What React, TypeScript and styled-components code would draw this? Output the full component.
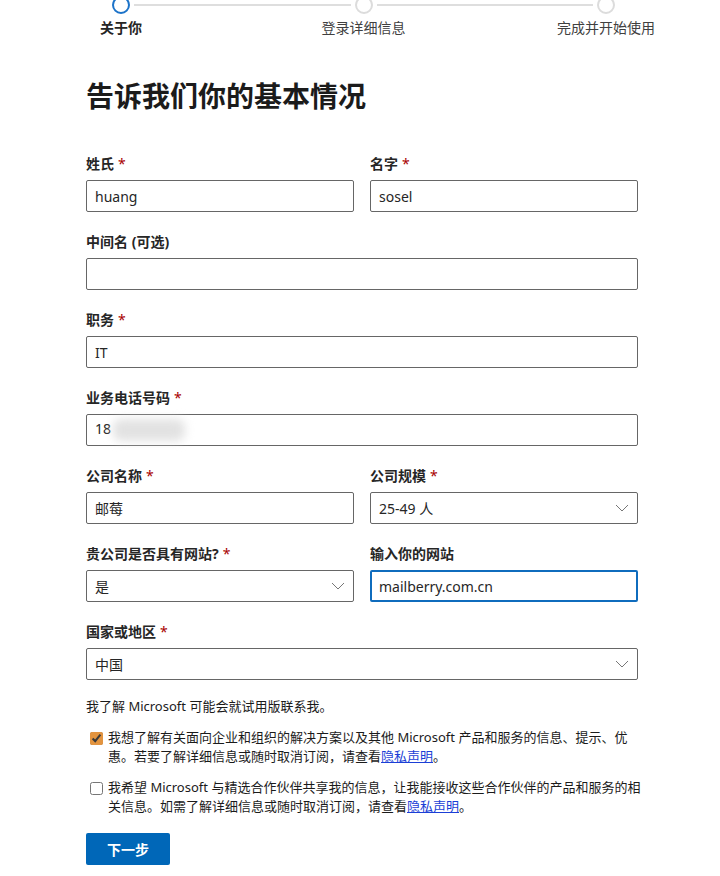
import styled, { createGlobalStyle } from 'styled-components';

const GlobalStyle = createGlobalStyle`
  html, body {
    margin: 0;
    padding: 0;
    background: #fff;
  }
  body {
    font-family: "Segoe UI", "Noto Sans", "Noto Sans CJK SC", sans-serif;
    color: #1b1b1b;
  }
  * {
    box-sizing: border-box;
  }
`;

const Page = styled.div`
  width: 720px;
  padding: 0 82px 0 86px;
  overflow: hidden;
`;

// --- progress header ---
const Stepper = styled.div`
  display: flex;
  align-items: flex-start;
  width: 503px;
  margin: -4px 0 0 26px;
`;

const Step = styled.div`
  display: flex;
  flex-direction: column;
  align-items: center;
  width: 18px;
`;

const Dot = styled.span<{ $active?: boolean }>`
  width: 18px;
  height: 18px;
  border-radius: 50%;
  border: 2px solid ${(p) => (p.$active ? '#1c73c9' : '#dcdcdc')};
  background: #fff;
`;

const StepLabel = styled.span<{ $active?: boolean }>`
  margin-top: 4px;
  font-size: 14px;
  line-height: 20px;
  white-space: nowrap;
  font-weight: ${(p) => (p.$active ? 700 : 400)};
  color: ${(p) => (p.$active ? '#262626' : '#404040')};
`;

const Line = styled.span`
  flex: 1;
  height: 2px;
  margin: 8px 4px 0;
  background: #dedede;
`;

const Title = styled.h1`
  margin: 40px 0 40px;
  font-size: 28px;
  line-height: 36px;
  font-weight: 700;
  color: #1b1b1b;
`;

// --- form ---
const Grid = styled.div`
  display: grid;
  grid-template-columns: 1fr 1fr;
  column-gap: 16px;
  row-gap: 20px;
`;

const Field = styled.div<{ $wide?: boolean }>`
  display: flex;
  flex-direction: column;
  grid-column: ${(p) => (p.$wide ? '1 / span 2' : 'auto')};
`;

const Label = styled.label`
  font-size: 14px;
  line-height: 20px;
  font-weight: 700;
  color: #262626;
  margin-bottom: 6px;
`;

const Req = styled.span`
  color: #a80000;
  margin-left: 4px;
  font-weight: 400;
`;

const Input = styled.input<{ $focused?: boolean }>`
  height: 32px;
  width: 100%;
  margin: 0;
  border: ${(p) => (p.$focused ? '2px solid #0f6cbd' : '1px solid #666')};
  border-radius: 2px;
  padding: 0 ${(p) => (p.$focused ? '7px' : '8px')};
  font: inherit;
  font-size: 14px;
  color: #262626;
  background: #fff;
  outline: none;
`;

const Box = styled.div`
  height: 32px;
  display: flex;
  align-items: center;
  justify-content: space-between;
  border: 1px solid #666;
  border-radius: 2px;
  padding: 0 8px;
  font-size: 14px;
  color: #262626;
`;

const Masked = styled.span`
  display: inline-block;
  width: 72px;
  height: 22px;
  margin-left: 2px;
  vertical-align: middle;
  background: #e2e2e2;
  border-radius: 8px;
  filter: blur(5px);
`;

const Chevron = () => (
  <svg width="14" height="8" viewBox="0 0 14 8" fill="none">
    <polyline points="1,1 7,7 13,1" stroke="#777" strokeWidth="1" />
  </svg>
);

const Select = ({ value }: { value: string }) => (
  <Box role="combobox">
    <span>{value}</span>
    <Chevron />
  </Box>
);

// --- consent + submit ---
const Note = styled.p`
  margin: 16px 0 12px;
  font-size: 13px;
  line-height: 20px;
  color: #1b1b1b;
`;

const Consent = styled.label`
  display: flex;
  align-items: flex-start;
  font-size: 13px;
  line-height: 19px;
  color: #1b1b1b;
  & + & {
    margin-top: 12px;
  }
`;

const ConsentText = styled.span`
  margin-right: -3px;
`;

const Check = styled.input`
  flex: none;
  width: 13px;
  height: 13px;
  margin: 4px 5px 0 4px;
  accent-color: #e3943f;
`;

const Link = styled.a`
  color: #1b3fd6;
  text-decoration: underline;
`;

const Next = styled.button`
  margin-top: 17px;
  width: 84px;
  height: 32px;
  border: none;
  border-radius: 2px;
  background: #0067b8;
  color: #fff;
  font: inherit;
  font-size: 14px;
  font-weight: 700;
  cursor: pointer;
`;

const steps = ['关于你', '登录详细信息', '完成并开始使用'];

export default function App() {
  return (
    <Page>
      <GlobalStyle />
      <Stepper>
        {steps.map((s, i) => (
          <>
            {i > 0 && <Line key={`l${i}`} />}
            <Step key={s}>
              <Dot $active={i === 0} />
              <StepLabel $active={i === 0}>{s}</StepLabel>
            </Step>
          </>
        ))}
      </Stepper>

      <Title>告诉我们你的基本情况</Title>

      <Grid>
        <Field>
          <Label>姓氏<Req>*</Req></Label>
          <Input defaultValue="huang" />
        </Field>
        <Field>
          <Label>名字<Req>*</Req></Label>
          <Input defaultValue="sosel" />
        </Field>
        <Field $wide>
          <Label>中间名 (可选)</Label>
          <Input />
        </Field>
        <Field $wide>
          <Label>职务<Req>*</Req></Label>
          <Input defaultValue="IT" />
        </Field>
        <Field $wide>
          <Label>业务电话号码<Req>*</Req></Label>
          <Box>
            <span>
              18<Masked />
            </span>
          </Box>
        </Field>
        <Field>
          <Label>公司名称<Req>*</Req></Label>
          <Input defaultValue="邮莓" />
        </Field>
        <Field>
          <Label>公司规模<Req>*</Req></Label>
          <Select value="25-49 人" />
        </Field>
        <Field>
          <Label>贵公司是否具有网站?<Req>*</Req></Label>
          <Select value="是" />
        </Field>
        <Field>
          <Label>输入你的网站</Label>
          <Input $focused autoFocus defaultValue="mailberry.com.cn" />
        </Field>
        <Field $wide>
          <Label>国家或地区<Req>*</Req></Label>
          <Select value="中国" />
        </Field>
      </Grid>

      <Note>我了解 Microsoft 可能会就试用版联系我。</Note>

      <Consent>
        <Check type="checkbox" defaultChecked />
        <ConsentText>
          我想了解有关面向企业和组织的解决方案以及其他 Microsoft 产品和服务的信息、提示、优惠。若要了解详细信息或随时取消订阅，请查看<Link href="#">隐私声明</Link>。
        </ConsentText>
      </Consent>
      <Consent>
        <Check type="checkbox" />
        <ConsentText>
          我希望 Microsoft 与精选合作伙伴共享我的信息，让我能接收这些合作伙伴的产品和服务的相关信息。如需了解详细信息或随时取消订阅，请查看<Link href="#">隐私声明</Link>。
        </ConsentText>
      </Consent>

      <Next>下一步</Next>
    </Page>
  );
}
